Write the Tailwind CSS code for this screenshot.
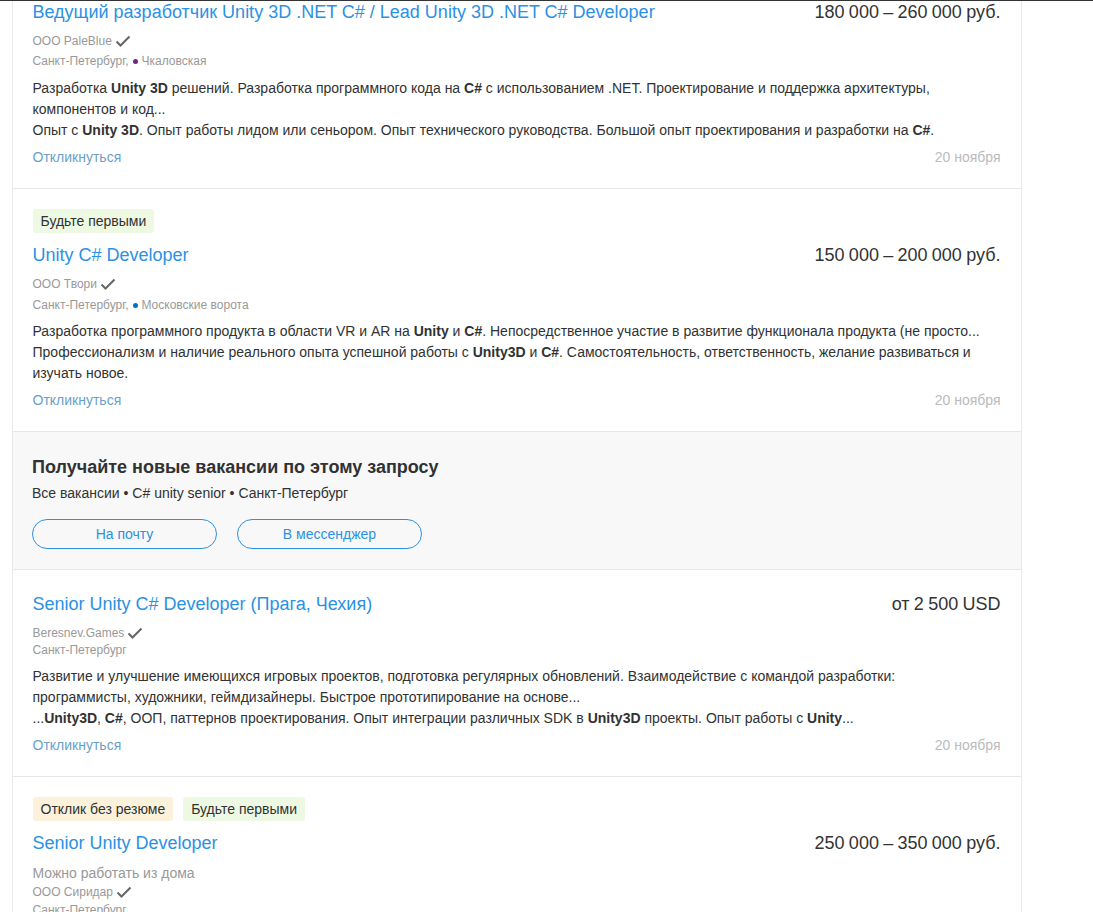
<!DOCTYPE html>
<html lang="ru">
<head>
<meta charset="utf-8">
<script src="https://cdn.jsdelivr.net/npm/@tailwindcss/browser@4"></script>
</head>
<body class="bg-white font-['Liberation_Sans',Arial,sans-serif] text-[14px] text-[#303233] h-[912px] overflow-hidden">
<div class="h-px bg-[#333333]"></div>
<main class="ml-3 w-[1010px] border-x border-[#e8e8e8] h-[911px] overflow-hidden">

<section class="h-[189px] pl-[19.5px] pr-[20.5px] border-b border-[#e8e8e8]">
  <div class="flex justify-between text-[18px] leading-6 h-6 -mt-[1px]"><a class="text-[#2b91e3]">Ведущий разработчик Unity 3D .NET C# / Lead Unity 3D .NET C# Developer</a><span class="text-[#333] [word-spacing:-0.7px]">180 000 – 260 000 руб.</span></div>
  <div class="mt-[7px] flex items-center h-5 text-[12px] text-[#999]">ООО PaleBlue<svg class="ml-[3px]" width="16" height="12" viewBox="0 0 16 12" fill="none"><path d="M1.5 6.5 5.5 10.5 14.5 1.5" stroke="#666" stroke-width="2"/></svg></div>
  <div class="flex items-center h-5 text-[12px] text-[#999]">Санкт-Петербург,<span class="ml-[5px] mr-[3px] size-[5px] rounded-full bg-[#702785]"></span>Чкаловская</div>
  <p class="mt-[7px] leading-[21px]">Разработка <b>Unity 3D</b> решений. Разработка программного кода на <b>C#</b> с использованием .NET. Проектирование и поддержка архитектуры,<br>компонентов и код...<br>Опыт с <b>Unity 3D</b>. Опыт работы лидом или сеньором. Опыт технического руководства. Большой опыт проектирования и разработки на <b>C#</b>.</p>
  <div class="mt-[6px] flex justify-between leading-[21px]"><a class="text-[#6b9fc9]">Откликнуться</a><span class="text-[#bbb]">20 ноября</span></div>
</section>

<section class="h-[243px] pl-[19.5px] pr-[20.5px] pt-[20px] border-b border-[#e8e8e8]">
  <div class="flex"><span class="h-6 leading-6 px-2 rounded-[3px] bg-[#eef9e3]">Будьте первыми</span></div>
  <div class="mt-[10px] flex justify-between text-[18px] leading-6 h-6"><a class="text-[#2b91e3]">Unity C# Developer</a><span class="text-[#333] [word-spacing:-0.7px]">150 000 – 200 000 руб.</span></div>
  <div class="mt-[7px] flex items-center h-5 text-[12px] text-[#999]">ООО Твори<svg class="ml-[3px]" width="16" height="12" viewBox="0 0 16 12" fill="none"><path d="M1.5 6.5 5.5 10.5 14.5 1.5" stroke="#666" stroke-width="2"/></svg></div>
  <div class="flex items-center h-5 text-[12px] text-[#999] mt-[1px]">Санкт-Петербург,<span class="ml-[5px] mr-[3px] size-[5px] rounded-full bg-[#0072ba]"></span>Московские ворота</div>
  <p class="mt-[6px] leading-[21px]">Разработка программного продукта в области VR и AR на <b>Unity</b> и <b>C#</b>. Непосредственное участие в развитие функционала продукта (не просто...<br>Профессионализм и наличие реального опыта успешной работы с <b>Unity3D</b> и <b>C#</b>. Самостоятельность, ответственность, желание развиваться и<br>изучать новое.</p>
  <div class="mt-[6px] flex justify-between leading-[21px]"><a class="text-[#6b9fc9]">Откликнуться</a><span class="text-[#bbb]">20 ноября</span></div>
</section>

<section class="h-[138px] px-[19px] pt-[24px] bg-[#f8f8f8] border-b border-[#e8e8e8]">
  <h2 class="text-[18px] leading-[22px] font-bold text-[#303233]">Получайте новые вакансии по этому запросу</h2>
  <p class="mt-[5px] leading-5">Все вакансии • C# unity senior • Санкт-Петербург</p>
  <div class="mt-4 flex gap-5">
    <a class="w-[185px] h-[30px] flex items-center justify-center rounded-full border border-[#2b91e3] text-[#2b91e3]">На почту</a>
    <a class="w-[185px] h-[30px] flex items-center justify-center rounded-full border border-[#2b91e3] text-[#2b91e3]">В мессенджер</a>
  </div>
</section>

<section class="h-[207px] pl-[19.5px] pr-[20.5px] pt-[22px] border-b border-[#e8e8e8]">
  <div class="flex justify-between text-[18px] leading-6 h-6"><a class="text-[#2b91e3]">Senior Unity C# Developer (Прага, Чехия)</a><span class="text-[#333] [word-spacing:-0.7px]">от 2 500 USD</span></div>
  <div class="mt-[8px] flex items-center h-[18px] text-[12px] text-[#999]">Beresnev.Games<svg class="ml-[3px]" width="16" height="12" viewBox="0 0 16 12" fill="none"><path d="M1.5 6.5 5.5 10.5 14.5 1.5" stroke="#666" stroke-width="2"/></svg></div>
  <div class="-mt-px flex items-center h-[18px] text-[12px] text-[#999]">Санкт-Петербург</div>
  <p class="mt-[7px] leading-[21px]">Развитие и улучшение имеющихся игровых проектов, подготовка регулярных обновлений. Взаимодействие с командой разработки:<br>программисты, художники, геймдизайнеры. Быстрое прототипирование на основе...<br>...<b>Unity3D</b>, <b>C#</b>, ООП, паттернов проектирования. Опыт интеграции различных SDK в <b>Unity3D</b> проекты. Опыт работы с <b>Unity</b>...</p>
  <div class="mt-[6px] flex justify-between leading-[21px]"><a class="text-[#6b9fc9]">Откликнуться</a><span class="text-[#bbb]">20 ноября</span></div>
</section>

<section class="pl-[19.5px] pr-[20.5px] pt-[20px]">
  <div class="flex gap-[10px]"><span class="h-6 leading-6 px-2 rounded-[3px] bg-[#fcf2dc]">Отклик без резюме</span><span class="h-6 leading-6 px-2 rounded-[3px] bg-[#eef9e3]">Будьте первыми</span></div>
  <div class="mt-[10px] flex justify-between text-[18px] leading-6 h-6"><a class="text-[#2b91e3]">Senior Unity Developer</a><span class="text-[#333] [word-spacing:-0.7px]">250 000 – 350 000 руб.</span></div>
  <div class="mt-[8px] leading-5 text-[#999]">Можно работать из дома</div>
  <div class="flex items-center h-[18px] text-[12px] text-[#999]">ООО Сиридар<svg class="ml-[3px]" width="16" height="12" viewBox="0 0 16 12" fill="none"><path d="M1.5 6.5 5.5 10.5 14.5 1.5" stroke="#666" stroke-width="2"/></svg></div>
  <div class="flex items-center h-[18px] text-[12px] text-[#999]">Санкт-Петербург</div>
</section>
</main>
</body>
</html>
